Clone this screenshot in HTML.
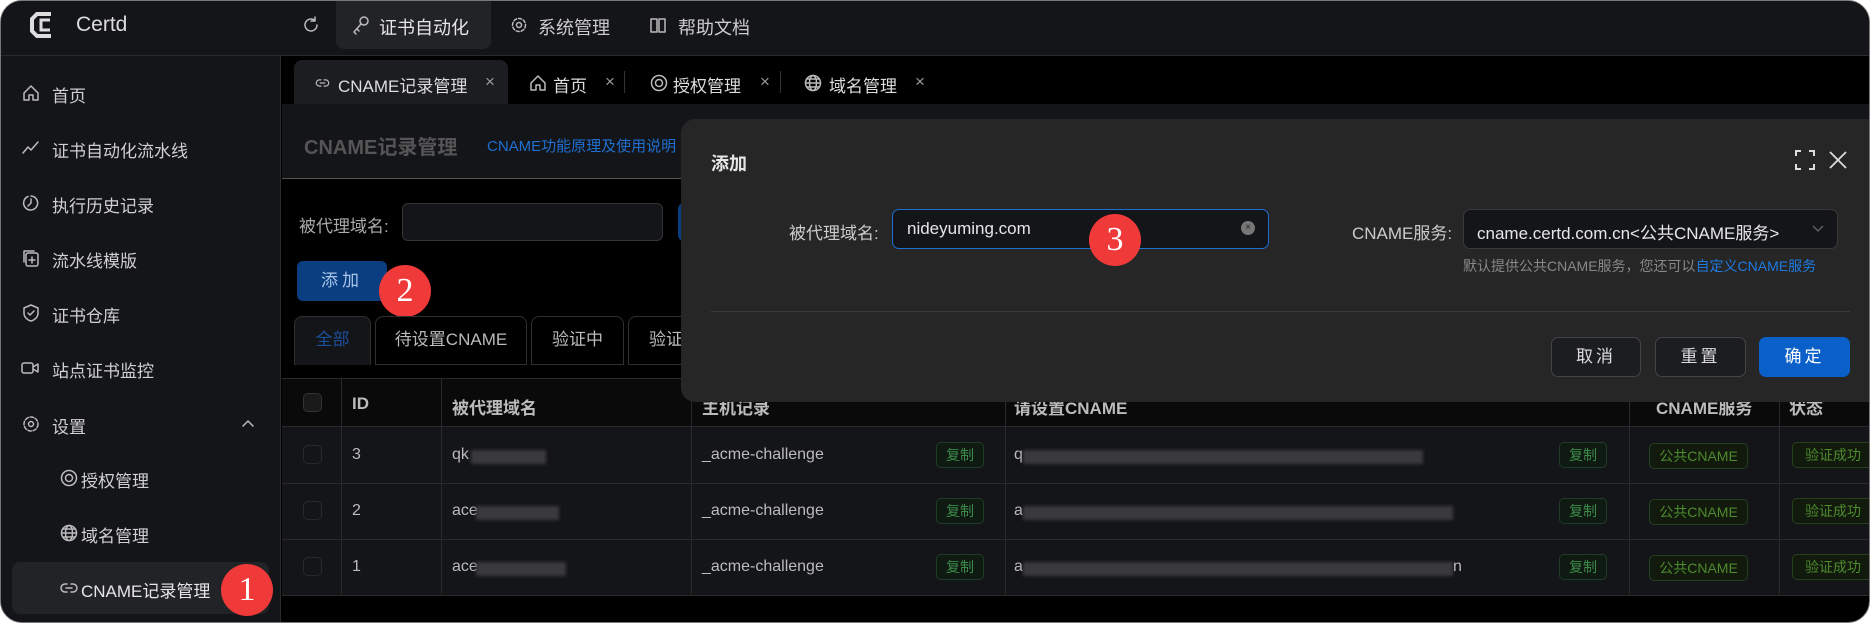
<!DOCTYPE html>
<html><head><meta charset="utf-8"><style>
*{box-sizing:border-box;margin:0;padding:0}
body{width:1870px;height:623px;background:#fff;font-family:"Liberation Sans","Noto Sans CJK SC",sans-serif;overflow:hidden;position:relative}
.win{position:absolute;left:0;top:0;width:1870px;height:623px;background:#000;border-radius:22px;overflow:hidden;border:1px solid #777}
.a{position:absolute;white-space:nowrap}
.hdr{left:0;top:0;width:1870px;height:55px;background:#141519;border-bottom:1px solid #2a2a2a}
.side{left:0;top:55px;width:280px;height:568px;background:#141519;border-right:1px solid #2a2a2a}
.si{font-size:17px;color:#d0d0d0}
.ic{stroke:#bbb;fill:none;stroke-width:1.5;stroke-linecap:round;stroke-linejoin:round}
svg.a{overflow:visible}
.tab{font-size:17px;color:#ddd}
.th{font-size:17px;font-weight:bold;color:#bbb}
.td{font-size:16px;color:#bbb}
.copy{width:48px;height:26px;border:1px solid #1f3d25;background:#0f1a12;border-radius:5px;color:#3d8b4a;font-size:14px;text-align:center;line-height:24px}
.tag{height:26px;border:1px solid #25401f;background:#111a0c;border-radius:5px;color:#4e8a2e;font-size:14px;text-align:center;line-height:24px}
.blur{background:#3a3a3e;filter:blur(1.5px);height:14px}
.badge{width:52px;height:52px;border-radius:50%;background:#f03a3a;color:#fff;font-family:"Liberation Serif",serif;font-size:34px;text-align:center;line-height:52px}
.btn{height:40px;border-radius:7px;border:1px solid #444;background:#1c1d21;color:#ddd;font-size:17px;text-align:center;line-height:38px;letter-spacing:3px}
</style></head><body><div class="win">
<div class="a hdr"></div>
<svg class="a" style="left:28px;top:9px" width="32" height="30" viewBox="0 0 32 30"><path d="M22 4H8L3 9v12l5 5h14" stroke="#ddd" stroke-width="4" fill="none"/><path d="M21 10h-9v10h9" stroke="#ddd" stroke-width="3" fill="none"/></svg>
<div class="a" style="left:75px;top:12px;font-size:21px;color:#ddd">Certd</div>
<svg class="a" style="left:301px;top:15px" width="18" height="18" viewBox="0 0 18 18"><path d="M15 9a6 6 0 1 1-2-4.5M13 1v4h-4" class="ic"/></svg>
<div class="a" style="left:335px;top:0;width:155px;height:48px;background:#222327;border-radius:0 0 8px 8px"></div>
<svg class="a" style="left:350px;top:14px" width="20" height="20" viewBox="0 0 20 20"><circle cx="13" cy="6" r="4" class="ic"/><path d="M10 9L3 17l2 2M6 14l2 2" class="ic"/></svg>
<div class="a" style="left:378px;top:13px;font-size:18px;color:#e6e6e6">证书自动化</div>
<svg class="a" style="left:509px;top:15px" width="18" height="18" viewBox="0 0 18 18"><circle cx="9" cy="9" r="2.5" class="ic"/><circle cx="9" cy="9" r="6.5" class="ic" stroke-dasharray="3 2"/></svg>
<div class="a" style="left:537px;top:13px;font-size:18px;color:#ccc">系统管理</div>
<svg class="a" style="left:648px;top:15px" width="18" height="18" viewBox="0 0 18 18"><path d="M2 3h6v13H2zM10 3h6v13h-6z" class="ic"/></svg>
<div class="a" style="left:677px;top:13px;font-size:18px;color:#ccc">帮助文档</div>

<div class="a side"></div>
<svg class="a" style="left:21px;top:83px" width="18" height="18" viewBox="0 0 18 18"><path d="M2 9l7-7 7 7v7h-5v-5H7v5H2z" class="ic"/></svg><div class="a si" style="left:51px;top:81px">首页</div>
<svg class="a" style="left:21px;top:138px" width="18" height="18" viewBox="0 0 18 18"><path d="M1 14l5-6 3 3 7-8" class="ic"/></svg><div class="a si" style="left:51px;top:136px">证书自动化流水线</div>
<svg class="a" style="left:21px;top:193px" width="18" height="18" viewBox="0 0 18 18"><path d="M6 2.5A7 7 0 1 0 9 2M9 5v4l-3 3" class="ic"/></svg><div class="a si" style="left:51px;top:191px">执行历史记录</div>
<svg class="a" style="left:21px;top:248px" width="18" height="18" viewBox="0 0 18 18"><rect x="4" y="4" width="12" height="13" rx="2" class="ic"/><path d="M2 13V2h10M10 8v6M7 11h6" class="ic"/></svg><div class="a si" style="left:51px;top:246px">流水线模版</div>
<svg class="a" style="left:21px;top:303px" width="18" height="18" viewBox="0 0 18 18"><path d="M9 1l7 3v5c0 4-3 7-7 8-4-1-7-4-7-8V4z M6 9l2 2 4-4" class="ic"/></svg><div class="a si" style="left:51px;top:301px">证书仓库</div>
<svg class="a" style="left:20px;top:358px" width="18" height="18" viewBox="0 0 18 18"><rect x="1" y="4" width="11" height="10" rx="2" class="ic"/><path d="M12 8l5-3v8l-5-3" class="ic"/></svg><div class="a si" style="left:51px;top:356px">站点证书监控</div>
<svg class="a" style="left:21px;top:414px" width="18" height="18" viewBox="0 0 18 18"><circle cx="9" cy="9" r="2.5" class="ic"/><circle cx="9" cy="9" r="7" class="ic" stroke-dasharray="3.5 1.8"/></svg><div class="a si" style="left:51px;top:412px">设置</div>
<svg class="a" style="left:241px;top:418px" width="12" height="8" viewBox="0 0 12 8"><path d="M1 7l5-5 5 5" class="ic"/></svg>
<svg class="a" style="left:59px;top:468px" width="18" height="18" viewBox="0 0 18 18"><circle cx="9" cy="9" r="7.5" class="ic"/><circle cx="9" cy="9" r="3.5" class="ic"/></svg><div class="a si" style="left:80px;top:466px">授权管理</div>
<svg class="a" style="left:59px;top:523px" width="18" height="18" viewBox="0 0 18 18"><circle cx="9" cy="9" r="7.5" class="ic"/><ellipse cx="9" cy="9" rx="3.5" ry="7.5" class="ic"/><path d="M1.5 9h15M3 5h12M3 13h12" class="ic"/></svg><div class="a si" style="left:80px;top:521px">域名管理</div>
<div class="a" style="left:11px;top:561px;width:257px;height:52px;background:#222327;border-radius:8px"></div>
<svg class="a" style="left:59px;top:578px" width="18" height="18" viewBox="0 0 18 18"><path d="M7 5H5a4 4 0 0 0 0 8h2M11 5h2a4 4 0 0 1 0 8h-2M6 9h6" class="ic"/></svg><div class="a si" style="left:80px;top:576px;color:#e6e6e6">CNAME记录管理</div>

<!-- tabs -->
<div class="a" style="left:293px;top:59px;width:214px;height:44px;background:#1c1d21;border-radius:8px 8px 0 0"></div>
<svg class="a" style="left:313px;top:75px" width="17" height="14" viewBox="0 0 18 18"><path d="M7 5H5a4 4 0 0 0 0 8h2M11 5h2a4 4 0 0 1 0 8h-2M6 9h6" class="ic"/></svg>
<div class="a tab" style="left:337px;top:71px">CNAME记录管理</div><div class="a tab" style="left:484px;top:71px;color:#999">×</div>
<svg class="a" style="left:528px;top:73px" width="18" height="18" viewBox="0 0 18 18"><path d="M2 9l7-7 7 7v7h-5v-5H7v5H2z" class="ic"/></svg>
<div class="a tab" style="left:552px;top:71px">首页</div><div class="a tab" style="left:604px;top:71px;color:#999">×</div>
<div class="a" style="left:623px;top:70px;width:1px;height:22px;background:#333"></div>
<svg class="a" style="left:649px;top:73px" width="18" height="18" viewBox="0 0 18 18"><circle cx="9" cy="9" r="7.5" class="ic"/><circle cx="9" cy="9" r="3.5" class="ic"/></svg>
<div class="a tab" style="left:672px;top:71px">授权管理</div><div class="a tab" style="left:759px;top:71px;color:#999">×</div>
<div class="a" style="left:779px;top:70px;width:1px;height:22px;background:#333"></div>
<svg class="a" style="left:803px;top:73px" width="18" height="18" viewBox="0 0 18 18"><circle cx="9" cy="9" r="7.5" class="ic"/><ellipse cx="9" cy="9" rx="3.5" ry="7.5" class="ic"/><path d="M1.5 9h15M3 5h12M3 13h12" class="ic"/></svg>
<div class="a tab" style="left:828px;top:71px">域名管理</div><div class="a tab" style="left:914px;top:71px;color:#999">×</div>

<div class="a" style="left:281px;top:103px;width:1589px;height:75px;background:#141519;border-bottom:1px solid #555"></div>
<div class="a" style="left:303px;top:130px;font-size:20px;font-weight:bold;color:#555">CNAME记录管理</div>
<div class="a" style="left:486px;top:134px;font-size:15px;color:#1f6fd0">CNAME功能原理及使用说明</div>

<div class="a" style="left:298px;top:211px;font-size:17px;color:#aaa">被代理域名:</div>
<div class="a" style="left:401px;top:202px;width:261px;height:38px;background:#141519;border:1px solid #333;border-radius:6px"></div>
<div class="a" style="left:677px;top:202px;width:10px;height:38px;background:#0a3e80;border-radius:6px 0 0 6px"></div>
<div class="a" style="left:296px;top:260px;width:90px;height:40px;background:#0a3e80;border-radius:6px;color:#aac4e8;font-size:17px;text-align:center;line-height:40px;letter-spacing:4px">添加</div>
<div class="a badge" style="left:378px;top:264px">2</div>

<div class="a" style="left:293px;top:315px;width:77px;height:49px;background:#141519;border:1px solid #303030;border-bottom:none;border-radius:8px 8px 0 0;color:#1b4f9a;font-size:17px;text-align:center;line-height:46px">全部</div>
<div class="a" style="left:374px;top:315px;width:152px;height:49px;border:1px solid #303030;border-radius:8px 8px 0 0;color:#bbb;font-size:17px;text-align:center;line-height:46px">待设置CNAME</div>
<div class="a" style="left:530px;top:315px;width:93px;height:49px;border:1px solid #303030;border-radius:8px 8px 0 0;color:#bbb;font-size:17px;text-align:center;line-height:46px">验证中</div>
<div class="a" style="left:627px;top:315px;width:93px;height:49px;border:1px solid #303030;border-radius:8px 8px 0 0;color:#bbb;font-size:17px;line-height:46px;padding-left:20px">验证</div>

<!-- table -->
<div class="a" style="left:281px;top:377px;width:1589px;height:49px;background:#0a0a0a;border-top:1px solid #2a2a2a;border-bottom:1px solid #2a2a2a"></div>
<div class="a" style="left:281px;top:426px;width:1589px;height:168px;background:#141519"></div>
<div class="a" style="left:281px;top:482px;width:1589px;height:1px;background:#2a2a2a"></div>
<div class="a" style="left:281px;top:538px;width:1589px;height:1px;background:#2a2a2a"></div>
<div class="a" style="left:281px;top:594px;width:1589px;height:1px;background:#2a2a2a"></div>
<div class="a" style="left:340px;top:377px;width:1px;height:217px;background:#2a2a2a"></div>
<div class="a" style="left:440px;top:377px;width:1px;height:217px;background:#2a2a2a"></div>
<div class="a" style="left:690px;top:377px;width:1px;height:217px;background:#2a2a2a"></div>
<div class="a" style="left:1004px;top:377px;width:1px;height:217px;background:#2a2a2a"></div>
<div class="a" style="left:1628px;top:377px;width:1px;height:217px;background:#2a2a2a"></div>
<div class="a" style="left:1778px;top:377px;width:1px;height:217px;background:#2a2a2a"></div>
<div class="a" style="left:302px;top:392px;width:19px;height:19px;border:1px solid #333;border-radius:5px;background:#1a1a1a"></div>
<div class="a th" style="left:351px;top:393px">ID</div>
<div class="a th" style="left:451px;top:393px">被代理域名</div>
<div class="a th" style="left:701px;top:393px">主机记录</div>
<div class="a th" style="left:1013px;top:393px">请设置CNAME</div>
<div class="a th" style="left:1655px;top:393px">CNAME服务</div>
<div class="a th" style="left:1788px;top:393px">状态</div>

<div class="a" style="left:302px;top:444px;width:19px;height:19px;border:1px solid #2a2a2a;border-radius:5px"></div>
<div class="a td" style="left:351px;top:445px">3</div><div class="a td" style="left:451px;top:445px">qk</div><div class="a blur" style="left:470px;top:449px;width:75px"></div>
<div class="a td" style="left:701px;top:445px">_acme-challenge</div><div class="a copy" style="left:935px;top:441px">复制</div>
<div class="a td" style="left:1013px;top:445px">q</div><div class="a blur" style="left:1022px;top:449px;width:400px"></div>
<div class="a copy" style="left:1558px;top:441px">复制</div><div class="a tag" style="left:1648px;top:442px;width:99px">公共CNAME</div><div class="a tag" style="left:1791px;top:441px;width:82px">验证成功</div>

<div class="a" style="left:302px;top:500px;width:19px;height:19px;border:1px solid #2a2a2a;border-radius:5px"></div>
<div class="a td" style="left:351px;top:501px">2</div><div class="a td" style="left:451px;top:501px">ace</div><div class="a blur" style="left:475px;top:505px;width:83px"></div>
<div class="a td" style="left:701px;top:501px">_acme-challenge</div><div class="a copy" style="left:935px;top:497px">复制</div>
<div class="a td" style="left:1013px;top:501px">a</div><div class="a blur" style="left:1022px;top:505px;width:430px"></div>
<div class="a copy" style="left:1558px;top:497px">复制</div><div class="a tag" style="left:1648px;top:498px;width:99px">公共CNAME</div><div class="a tag" style="left:1791px;top:497px;width:82px">验证成功</div>

<div class="a" style="left:302px;top:556px;width:19px;height:19px;border:1px solid #2a2a2a;border-radius:5px"></div>
<div class="a td" style="left:351px;top:557px">1</div><div class="a td" style="left:451px;top:557px">ace</div><div class="a blur" style="left:475px;top:561px;width:90px"></div>
<div class="a td" style="left:701px;top:557px">_acme-challenge</div><div class="a copy" style="left:935px;top:553px">复制</div>
<div class="a td" style="left:1013px;top:557px">a</div><div class="a blur" style="left:1022px;top:561px;width:430px"></div><div class="a td" style="left:1452px;top:557px">n</div>
<div class="a copy" style="left:1558px;top:553px">复制</div><div class="a tag" style="left:1648px;top:554px;width:99px">公共CNAME</div><div class="a tag" style="left:1791px;top:553px;width:82px">验证成功</div>

<div class="a badge" style="left:220px;top:563px">1</div>

<!-- modal -->
<div class="a" style="left:680px;top:118px;width:1190px;height:283px;background:#262626;border-radius:14px 0 0 14px"></div>
<div class="a" style="left:710px;top:149px;font-size:18px;font-weight:bold;color:#e6e6e6">添加</div>
<svg class="a" style="left:1794px;top:149px" width="20" height="20" viewBox="0 0 20 20"><path d="M1 6V1h5M14 1h5v5M19 14v5h-5M6 19H1v-5" stroke="#ddd" stroke-width="2" fill="none"/></svg>
<svg class="a" style="left:1828px;top:150px" width="18" height="18" viewBox="0 0 18 18"><path d="M1 1l16 16M17 1L1 17" stroke="#ddd" stroke-width="1.8"/></svg>
<div class="a" style="left:788px;top:218px;font-size:17px;color:#ccc">被代理域名:</div>
<div class="a" style="left:891px;top:208px;width:377px;height:40px;background:#141519;border:1.5px solid #1f6fd0;border-radius:7px"></div>
<div class="a" style="left:906px;top:218px;font-size:17px;color:#e6e6e6">nideyuming.com</div>
<div class="a" style="left:1240px;top:220px;width:14px;height:14px;border-radius:50%;background:#777;color:#222;font-size:10px;text-align:center;line-height:14px">×</div>
<div class="a badge" style="left:1088px;top:213px">3</div>
<div class="a" style="left:1351px;top:218px;font-size:17px;color:#ccc">CNAME服务:</div>
<div class="a" style="left:1462px;top:208px;width:375px;height:40px;background:#141519;border:1px solid #3a3a3a;border-radius:7px"></div>
<div class="a" style="left:1476px;top:218px;font-size:17px;color:#e6e6e6">cname.certd.com.cn&lt;公共CNAME服务&gt;</div>
<svg class="a" style="left:1811px;top:224px" width="12" height="8" viewBox="0 0 12 8"><path d="M1 1l5 5 5-5" stroke="#666" stroke-width="1.3" fill="none"/></svg>
<div class="a" style="left:1462px;top:255px;font-size:14px;color:#888">默认提供公共CNAME服务，您还可以<span style="color:#1f7ae0">自定义CNAME服务</span></div>
<div class="a" style="left:710px;top:310px;width:1139px;height:1px;background:#3a3a3a"></div>
<div class="a btn" style="left:1550px;top:336px;width:90px">取消</div>
<div class="a btn" style="left:1654px;top:336px;width:91px">重置</div>
<div class="a btn" style="left:1758px;top:336px;width:91px;background:#0a60c8;border-color:#0a60c8;color:#fff">确定</div>
</div></body></html>
